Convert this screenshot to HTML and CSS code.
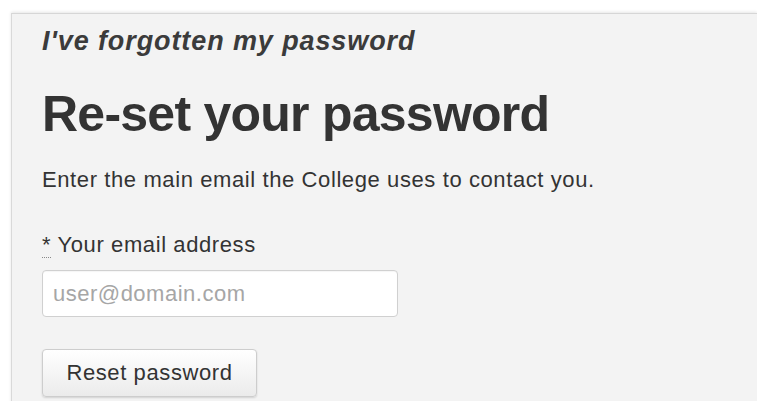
FILE: index.html
```html
<!DOCTYPE html>
<html lang="en">
<head>
<meta charset="utf-8">
<title>Re-set your password</title>
<link rel="stylesheet" href="styles.css">
</head>
<body>
<main class="panel">
  <p class="kicker">I've forgotten my password</p>
  <h1 class="title">Re-set your password</h1>
  <p class="intro">Enter the main email the College uses to contact you.</p>
  <form class="form" action="#" onsubmit="return false;">
    <label class="label" for="email"><abbr class="req" title="required">*</abbr> Your email address</label>
    <input class="field" id="email" type="email" placeholder="user@domain.com">
    <button class="btn" type="submit">Reset password</button>
  </form>
</main>
</body>
</html>
```
FILE: styles.css
```css
html, body {
  margin: 0;
  padding: 0;
  background: #fff;
  height: 100%;
  overflow: hidden;
}

body {
  font-family: "Liberation Sans", Arial, sans-serif;
  color: #333;
}

/* grey card that bleeds off the right and bottom edges */
.panel {
  margin: 13px 0 0 11px;
  height: 400px;
  background: #f3f3f3;
  border-top: 1px solid #d6d6d6;
  border-left: 1px solid #d9d9d9;
  box-shadow: 0 -1px 3px rgba(0, 0, 0, 0.1);
  padding: 12px 0 0 30px;
  box-sizing: border-box;
}

.kicker {
  margin: 0;
  font-size: 27px;
  line-height: 30px;
  font-weight: bold;
  font-style: italic;
  letter-spacing: 0.9px;
  color: #3b3b3b;
}

.title {
  margin: 30px 0 0;
  font-size: 50px;
  line-height: 56px;
  font-weight: bold;
  letter-spacing: -0.75px;
  color: #333;
}

.intro {
  margin: 25px 0 0;
  font-size: 22px;
  line-height: 26px;
  letter-spacing: 0.6px;
}

.form {
  display: flex;
  flex-direction: column;
  align-items: flex-start;
  margin-top: 39px;
}

.label {
  font-size: 22px;
  line-height: 26px;
  letter-spacing: 0.6px;
}

.req {
  text-decoration: none;
  border-bottom: 1px dotted #888;
  cursor: help;
}

.field {
  margin-top: 12px;
  width: 356px;
  height: 47px;
  box-sizing: border-box;
  border: 1px solid #d0d0d0;
  border-radius: 4px;
  background: #fff;
  padding: 0 10px;
  font-family: inherit;
  font-size: 22px;
  letter-spacing: 0.5px;
  color: #333;
  box-shadow: inset 0 1px 1px rgba(0, 0, 0, 0.04);
}

.field::placeholder {
  color: #a6a6a6;
}

.btn {
  margin-top: 32px;
  width: 215px;
  height: 48px;
  padding: 0;
  border: 1px solid #cdcdcd;
  border-radius: 4px;
  background: linear-gradient(#ffffff, #ebebeb);
  box-shadow: 0 1px 2px rgba(0, 0, 0, 0.14);
  font-family: inherit;
  font-size: 22px;
  letter-spacing: 0.6px;
  color: #333;
}
```
